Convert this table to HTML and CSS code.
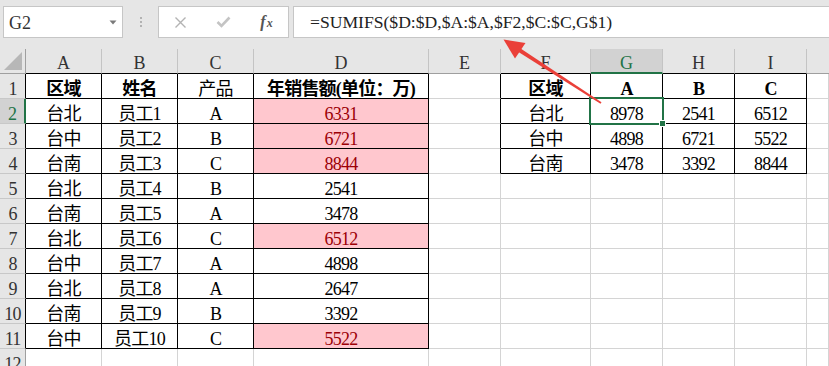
FILE: index.html
```html
<!DOCTYPE html>
<html lang="zh">
<head>
<meta charset="utf-8">
<title>SUMIFS</title>
<link rel="stylesheet" href="styles.css">
</head>
<body>
<div class="toolbar">
  <div class="namebox">
    <span class="ref">G2</span>
    <svg class="caret" width="8" height="5" viewBox="0 0 8 5"><path d="M0.5 0.5H7.5L4 4.5Z" fill="#7a7a7a"/></svg>
  </div>
  <div class="grip"><i></i><i></i><i></i></div>
  <div class="fbtns">
    <span class="fbtn">
      <svg width="13" height="13" viewBox="0 0 13 13"><path d="M1.5 1.5L11.5 11.5M11.5 1.5L1.5 11.5" stroke="#b3b3b3" stroke-width="1.4"/></svg>
    </span>
    <span class="fbtn">
      <svg width="15" height="12" viewBox="0 0 15 12"><path d="M1.5 6L5.5 10L13.5 1.5" stroke="#c4c4c4" stroke-width="2.6" fill="none"/></svg>
    </span>
    <span class="fbtn fx"><i>f</i><i class="x">x</i></span>
  </div>
  <div class="formula">=SUMIFS($D:$D,$A:$A,$F2,$C:$C,G$1)</div>
</div>

<div class="sheet">
  <!-- column headers -->
  <div class="ch corner"><svg width="18" height="18" viewBox="0 0 18 18"><path d="M18 0V18H0Z" fill="#b7b7b7"/></svg></div>
  <div class="ch kb">A</div><div class="ch kb">B</div><div class="ch kb">C</div><div class="ch kb">D</div>
  <div class="ch">E</div>
  <div class="ch kb">F</div><div class="ch sel">G</div><div class="ch kb">H</div><div class="ch kb">I</div>
  <div class="ch last"></div>

  <!-- row 1 -->
  <div class="rh kr">1</div>
  <div class="c k bold">区域</div><div class="c k bold">姓名</div><div class="c k">产品</div><div class="c k bold">年销售额(单位：万)</div>
  <div class="c kr"></div>
  <div class="c k bold">区域</div><div class="c k bold">A</div><div class="c k bold">B</div><div class="c k bold">C</div>
  <div class="c"></div>

  <!-- row 2 -->
  <div class="rh selrow">2</div>
  <div class="c k">台北</div><div class="c k">员工1</div><div class="c k">A</div><div class="c k hi">6331</div>
  <div class="c kr"></div>
  <div class="c k">台北</div><div class="c k active">8978<span class="cursor"><span class="handle"></span></span></div><div class="c k">2541</div><div class="c k">6512</div>
  <div class="c"></div>

  <!-- row 3 -->
  <div class="rh kr">3</div>
  <div class="c k">台中</div><div class="c k">员工2</div><div class="c k">B</div><div class="c k hi">6721</div>
  <div class="c kr"></div>
  <div class="c k">台中</div><div class="c k">4898</div><div class="c k">6721</div><div class="c k">5522</div>
  <div class="c"></div>

  <!-- row 4 -->
  <div class="rh kr">4</div>
  <div class="c k">台南</div><div class="c k">员工3</div><div class="c k">C</div><div class="c k hi">8844</div>
  <div class="c kr"></div>
  <div class="c k">台南</div><div class="c k">3478</div><div class="c k">3392</div><div class="c k">8844</div>
  <div class="c"></div>

  <!-- row 5 -->
  <div class="rh kr">5</div>
  <div class="c k">台北</div><div class="c k">员工4</div><div class="c k">B</div><div class="c k">2541</div>
  <div class="c"></div><div class="c"></div><div class="c"></div><div class="c"></div><div class="c"></div><div class="c"></div>

  <!-- row 6 -->
  <div class="rh kr">6</div>
  <div class="c k">台南</div><div class="c k">员工5</div><div class="c k">A</div><div class="c k">3478</div>
  <div class="c"></div><div class="c"></div><div class="c"></div><div class="c"></div><div class="c"></div><div class="c"></div>

  <!-- row 7 -->
  <div class="rh kr">7</div>
  <div class="c k">台北</div><div class="c k">员工6</div><div class="c k">C</div><div class="c k hi">6512</div>
  <div class="c"></div><div class="c"></div><div class="c"></div><div class="c"></div><div class="c"></div><div class="c"></div>

  <!-- row 8 -->
  <div class="rh kr">8</div>
  <div class="c k">台中</div><div class="c k">员工7</div><div class="c k">A</div><div class="c k">4898</div>
  <div class="c"></div><div class="c"></div><div class="c"></div><div class="c"></div><div class="c"></div><div class="c"></div>

  <!-- row 9 -->
  <div class="rh kr">9</div>
  <div class="c k">台北</div><div class="c k">员工8</div><div class="c k">A</div><div class="c k">2647</div>
  <div class="c"></div><div class="c"></div><div class="c"></div><div class="c"></div><div class="c"></div><div class="c"></div>

  <!-- row 10 -->
  <div class="rh kr">10</div>
  <div class="c k">台南</div><div class="c k">员工9</div><div class="c k">B</div><div class="c k">3392</div>
  <div class="c"></div><div class="c"></div><div class="c"></div><div class="c"></div><div class="c"></div><div class="c"></div>

  <!-- row 11 -->
  <div class="rh kr">11</div>
  <div class="c k">台中</div><div class="c k">员工10</div><div class="c k">C</div><div class="c k hi">5522</div>
  <div class="c"></div><div class="c"></div><div class="c"></div><div class="c"></div><div class="c"></div><div class="c"></div>

  <!-- row 12 -->
  <div class="rh">12</div>
  <div class="c"></div><div class="c"></div><div class="c"></div><div class="c"></div>
  <div class="c"></div><div class="c"></div><div class="c"></div><div class="c"></div><div class="c"></div><div class="c"></div>
</div>

<!-- callout arrow pointing at the formula -->
<svg class="arrow" width="829" height="366" viewBox="0 0 829 366">
  <path d="M519.1 47.5L601.5 102.2L600.5 103.8L516.9 50.9Z" fill="#ea4039"/>
  <path d="M503.5 39.5L525.5 43L515 58.5Z" fill="#ea4039"/>
</svg>
</body>
</html>
```
FILE: styles.css
```css
html, body {
  margin: 0;
  padding: 0;
}

body {
  width: 829px;
  height: 366px;
  overflow: hidden;
  position: relative;
  background: #e6e6e6;
  font-family: "Liberation Serif", "Noto Sans CJK SC", serif;
  color: #000;
}

/* ---- formula bar ---- */
.toolbar {
  display: flex;
  align-items: flex-start;
  height: 49px;
  box-sizing: border-box;
  padding: 6px 0 0 3px;
}

.namebox {
  width: 120px;
  height: 32px;
  box-sizing: border-box;
  background: #fff;
  border: 1px solid #c6c6c6;
  display: flex;
  align-items: center;
  justify-content: space-between;
  padding: 0 5px 0 5px;
}

.namebox .ref {
  font-size: 18px;
  color: #333;
  line-height: 30px;
  padding-top: 1px;
}

.grip {
  width: 35px;
  height: 32px;
  display: flex;
  flex-direction: column;
  align-items: center;
  justify-content: center;
  gap: 2px;
}

.grip i {
  width: 2px;
  height: 2px;
  background: #b2b2b2;
}

.fbtns {
  width: 131px;
  height: 32px;
  box-sizing: border-box;
  background: #fff;
  border: 1px solid #c6c6c6;
  display: flex;
}

.fbtn {
  width: 43px;
  display: flex;
  align-items: center;
  justify-content: center;
}

.fx {
  font-style: italic;
  font-size: 16px;
  color: #555;
  font-weight: bold;
}

.fx .x {
  font-size: 12px;
  margin-left: 1px;
  margin-top: 3px;
}

.formula {
  margin-left: 4px;
  flex: 1;
  height: 32px;
  box-sizing: border-box;
  background: #fff;
  border: 1px solid #c6c6c6;
  border-right: none;
  font-size: 17.6px;
  color: #222;
  line-height: 30px;
  padding-left: 16px;
  white-space: nowrap;
}

/* ---- worksheet grid ---- */
.sheet {
  display: grid;
  grid-template-columns: 26px 76px 76px 76px 175px 72px 90px 72px 72px 72px 1fr;
  grid-auto-rows: 25px;
  background: #fff;
}

.sheet > div {
  box-sizing: border-box;
  border-right: 1px solid #d4d4d4;
  border-bottom: 1px solid #d4d4d4;
  text-align: center;
  white-space: nowrap;
  font-size: 17px;
  line-height: 18px;
  padding-top: 6px;
}

.ch {
  background: #e6e6e6;
  color: #333;
  border-right-color: #c4c4c4 !important;
  border-bottom-color: #9f9f9f !important;
  padding-top: 5px !important;
  font-size: 18px !important;
}

.ch.kb {
  border-bottom-color: #000 !important;
}

.ch.corner {
  padding: 0 !important;
  display: flex;
  align-items: flex-end;
  justify-content: flex-end;
  border-right-color: #9f9f9f !important;
}

.ch.corner svg {
  margin: 0 3px 3px 0;
}

.ch.sel {
  background: #d2d2d2;
  color: #217346;
  border-bottom: 2px solid #217346 !important;
}

.ch.last {
  border-right: none !important;
}

.rh {
  background: #e6e6e6;
  color: #333;
  border-right-color: #9f9f9f !important;
  border-bottom-color: #c8c8c8 !important;
  font-size: 18px !important;
  letter-spacing: -0.8px;
}

.rh.kr {
  border-right-color: #000 !important;
}

.rh.selrow {
  background: #d2d2d2;
  color: #217346;
  border-right: 2px solid #217346 !important;
}

.sheet > .c {
  font-size: 18px;
  letter-spacing: -0.8px;
}

.k {
  border-right-color: #000 !important;
  border-bottom-color: #000 !important;
}

.kr {
  border-right-color: #000 !important;
}

.bold {
  font-weight: bold;
}

.hi {
  background: #ffc7ce;
  color: #9c0006;
}

/* active cell outline and fill handle */
.active {
  position: relative;
}

.cursor {
  position: absolute;
  left: -2px;
  top: -2px;
  right: -2px;
  bottom: -2px;
  border: 2px solid #217346;
}

.handle {
  position: absolute;
  right: -4px;
  bottom: -4px;
  width: 5px;
  height: 5px;
  background: #217346;
  border: 1px solid #fff;
}

.arrow {
  position: absolute;
  left: 0;
  top: 0;
  pointer-events: none;
}
```
